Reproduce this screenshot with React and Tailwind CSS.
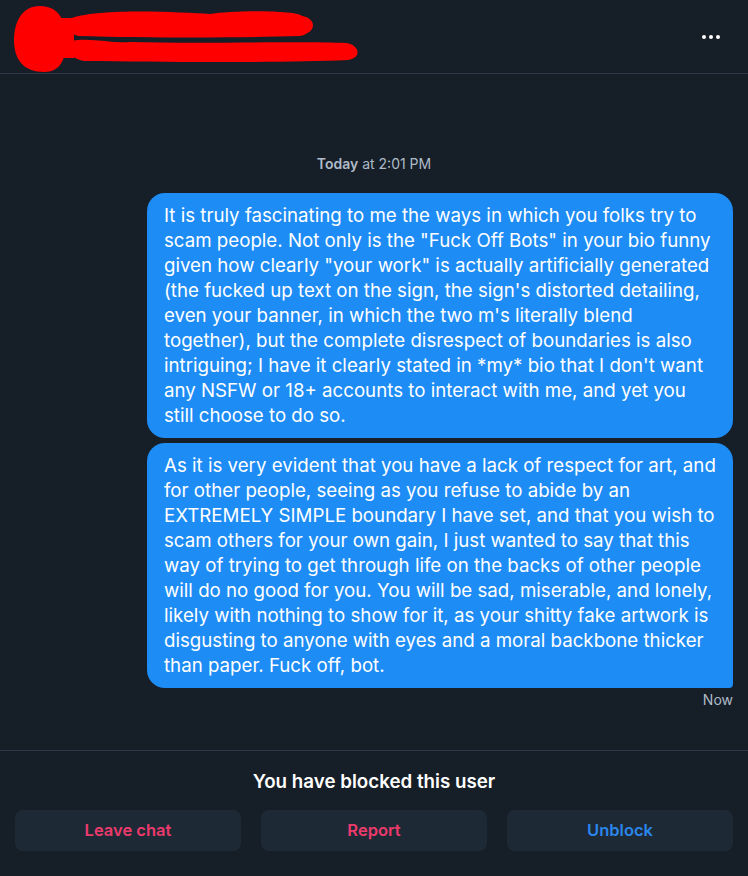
import React from "react";

const msg1 = [
  "It is truly fascinating to me the ways in which you folks try to",
  'scam people. Not only is the "Fuck Off Bots" in your bio funny',
  'given how clearly "your work" is actually artificially generated',
  "(the fucked up text on the sign, the sign's distorted detailing,",
  "even your banner, in which the two m's literally blend",
  "together), but the complete disrespect of boundaries is also",
  "intriguing; I have it clearly stated in *my* bio that I don't want",
  "any NSFW or 18+ accounts to interact with me, and yet you",
  "still choose to do so.",
];
const msg2 = [
  "As it is very evident that you have a lack of respect for art, and",
  "for other people, seeing as you refuse to abide by an",
  "EXTREMELY SIMPLE boundary I have set, and that you wish to",
  "scam others for your own gain, I just wanted to say that this",
  "way of trying to get through life on the backs of other people",
  "will do no good for you. You will be sad, miserable, and lonely,",
  "likely with nothing to show for it, as your shitty fake artwork is",
  "disgusting to anyone with eyes and a moral backbone thicker",
  "than paper. Fuck off, bot.",
];

function Bubble({ lines, last }) {
  return (
    <div
      className={
        last
          ? "w-[586px] bg-[#1d8cf5] text-white text-[18.7px] leading-[25px] px-[17px] py-[10px] rounded-[18px] rounded-br-[4px]"
          : "w-[586px] bg-[#1d8cf5] text-white text-[18.7px] leading-[25px] px-[17px] py-[10px] rounded-[18px]"
      }
    >
      {lines.map((l, i) => (
        <div key={i} className="whitespace-nowrap">
          {l}
        </div>
      ))}
    </div>
  );
}

export default function App() {
  return (
    <div
      className="w-[748px] h-[876px] bg-[#161e27] flex flex-col overflow-hidden"
      style={{ fontFamily: "Inter, 'Noto Sans', sans-serif" }}
    >
      {/* Header */}
      <div className="h-[74px] shrink-0 border-b border-[#2e3a48] flex items-center justify-between pr-[28px]">
        <svg width="370" height="74" viewBox="0 0 370 74" className="block">
          <path
            d="M40 6 C22 6 14 22 14 40 C14 60 24 72 44 72 C60 72 66 60 66 40 C66 20 58 6 40 6 Z"
            fill="#ff0000"
          />
          <path
            d="M72 18 C100 8 180 12 210 14 C232 10 298 10 302 16 C316 18 318 32 300 36 C240 38 150 38 78 36 C66 32 64 22 72 18 Z"
            fill="#ff0000"
          />
          <path
            d="M66 42 C90 36 110 44 130 42 C200 44 300 41 346 43 C360 45 362 58 348 60 C280 63 160 62 84 61 C70 58 62 48 66 42 Z"
            fill="#ff0000"
          />
          <rect x="60" y="18" width="14" height="40" fill="#ff0000" />
        </svg>
        <div className="flex gap-[3px] items-center">
          <span className="w-[4px] h-[4px] rounded-full bg-white block" />
          <span className="w-[4px] h-[4px] rounded-full bg-white block" />
          <span className="w-[4px] h-[4px] rounded-full bg-white block" />
        </div>
      </div>

      {/* Messages */}
      <div className="flex-1 flex flex-col px-[15px] pt-[81px]">
        <div className="text-center text-[14px] leading-[17px] text-[#aebbc9]">
          <span className="font-semibold">Today</span> at 2:01 PM
        </div>
        <div className="mt-[21px] flex flex-col items-end gap-[5px]">
          <Bubble lines={msg1} />
          <Bubble lines={msg2} last />
        </div>
        <div className="text-right text-[14px] leading-[17px] text-[#aebbc9] mt-[3px]">
          Now
        </div>
      </div>

      {/* Footer */}
      <div className="shrink-0 border-t border-[#2e3a48] px-[15px] pt-[19px] h-[126px]">
        <div className="text-center text-white text-[18.75px] leading-[24px] font-semibold">
          You have blocked this user
        </div>
        <div className="mt-[16px] grid grid-cols-3 gap-[20px]">
          <button className="h-[41px] rounded-[8px] bg-[#1e2936] text-[#ec3a6c] text-[16.5px] font-semibold">
            Leave chat
          </button>
          <button className="h-[41px] rounded-[8px] bg-[#1e2936] text-[#ec3a6c] text-[16.5px] font-semibold">
            Report
          </button>
          <button className="h-[41px] rounded-[8px] bg-[#1e2936] text-[#2a86eb] text-[16.5px] font-semibold">
            Unblock
          </button>
        </div>
      </div>
    </div>
  );
}
